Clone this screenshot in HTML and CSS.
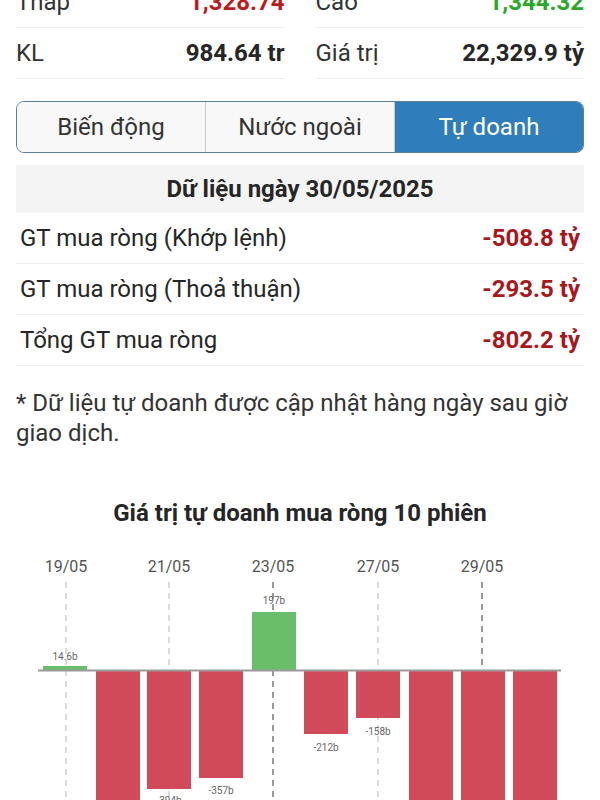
FILE: index.html
```html
<!DOCTYPE html>
<html>
  <head>
    <title>
      Tự doanh
    </title>
    <link rel="stylesheet" href="styles.css">
  </head>
  <body>
    <div class="page">
      <div class="stats">
        <div class="stat">
          <span class="stat-label">Thấp</span>
          <span class="stat-value down">1,328.74</span>
        </div>
        <div class="stat">
          <span class="stat-label">Cao</span>
          <span class="stat-value up">1,344.32</span>
        </div>
        <div class="stat">
          <span class="stat-label">KL</span>
          <span class="stat-value">984.64 tr</span>
        </div>
        <div class="stat">
          <span class="stat-label">Giá trị</span>
          <span class="stat-value">22,329.9 tỷ</span>
        </div>
      </div>

      <div class="tabs">
        <div class="tab">Biến động</div>
        <div class="tab">Nước ngoài</div>
        <div class="tab active">Tự doanh</div>
      </div>

      <div class="data-box">
        <div class="data-header">Dữ liệu ngày 30/05/2025</div>
        <div class="data-row">
          <span>GT mua ròng (Khớp lệnh)</span>
          <span class="data-value">-508.8 tỷ</span>
        </div>
        <div class="data-row">
          <span>GT mua ròng (Thoả thuận)</span>
          <span class="data-value">-293.5 tỷ</span>
        </div>
        <div class="data-row">
          <span>Tổng GT mua ròng</span>
          <span class="data-value">-802.2 tỷ</span>
        </div>
      </div>

      <p class="note">* Dữ liệu tự doanh được cập nhật hàng ngày sau giờ giao dịch.</p>

      <h3 class="chart-title">Giá trị tự doanh mua ròng 10 phiên</h3>
    </div>

    <svg class="chart" width="600" height="280" viewBox="0 0 600 280">
      <g class="dates">
        <text x="66" y="32">19/05</text>
        <text x="169" y="32">21/05</text>
        <text x="273" y="32">23/05</text>
        <text x="378" y="32">27/05</text>
        <text x="482" y="32">29/05</text>
      </g>
      <g class="grid">
        <line x1="66" y1="42" x2="66" y2="280"></line>
        <line x1="169" y1="42" x2="169" y2="280"></line>
        <line class="dark" x1="273" y1="42" x2="273" y2="280"></line>
        <line x1="378" y1="42" x2="378" y2="280"></line>
        <line class="dark" x1="482" y1="42" x2="482" y2="280"></line>
      </g>
      <g class="bars">
        <rect class="pos" x="43" y="126" width="44" height="4"></rect>
        <rect class="neg" x="96" y="131" width="44" height="160"></rect>
        <rect class="neg" x="147" y="131" width="44" height="118"></rect>
        <rect class="neg" x="199" y="131" width="44" height="107"></rect>
        <rect class="pos" x="252" y="72" width="44" height="58"></rect>
        <rect class="neg" x="304" y="131" width="44" height="63"></rect>
        <rect class="neg" x="356" y="131" width="44" height="47"></rect>
        <rect class="neg" x="409" y="131" width="44" height="160"></rect>
        <rect class="neg" x="461" y="131" width="44" height="160"></rect>
        <rect class="neg" x="513" y="131" width="44" height="160"></rect>
      </g>
      <line class="zero" x1="38" y1="130.5" x2="561" y2="130.5"></line>
      <g class="labels">
        <text x="65" y="120">14.6b</text>
        <text x="169" y="264">-394b</text>
        <text x="221" y="254">-357b</text>
        <text x="274" y="64">197b</text>
        <text x="326" y="211">-212b</text>
        <text x="378" y="195">-158b</text>
      </g>
    </svg>
  </body>
</html>
```

FILE: styles.css
```css
body {
  margin: 0;
  font-family: Roboto, "Noto Sans", sans-serif;
  color: #262626;
  background: #fff;
  overflow: hidden;
}

.page {
  padding: 0 16px;
}

.stats {
  display: grid;
  grid-template-columns: 1fr 1fr;
  column-gap: 31px;
  margin-top: -23px;
}

.stat {
  display: flex;
  justify-content: space-between;
  align-items: center;
  height: 50px;
  border-bottom: 1px solid #efefef;
  font-size: 24px;
}

.stat-label {
  color: #333;
}

.stat-value {
  font-weight: bold;
}

.stat-value.down {
  color: #bb1a1f;
}

.stat-value.up {
  color: #2ba82b;
}

.tabs {
  display: flex;
  margin-top: 22px;
  height: 50px;
  border: 1px solid #5d7f99;
  border-radius: 8px;
  overflow: hidden;
}

.tab {
  flex: 1;
  display: flex;
  align-items: center;
  justify-content: center;
  background: #f8f8f8;
  color: #333;
  font-size: 24px;
  border-right: 1px solid #c9c9c9;
}

.tab:last-child {
  border-right: none;
}

.tab.active {
  background: #2f7dba;
  color: #fff;
}

.data-box {
  margin-top: 12px;
}

.data-header {
  height: 48px;
  display: flex;
  align-items: center;
  justify-content: center;
  background: #f4f4f4;
  font-size: 24px;
  font-weight: bold;
}

.data-row {
  display: flex;
  justify-content: space-between;
  align-items: center;
  height: 50px;
  padding: 0 4px;
  border-bottom: 1px solid #efefef;
  font-size: 24px;
}

.data-value {
  color: #a8171c;
  font-weight: bold;
}

.note {
  margin: 22px 0 0;
  font-size: 24px;
  line-height: 30px;
  color: #333;
}

.chart-title {
  margin: 51px 0 0;
  text-align: center;
  font-size: 24px;
  line-height: 28px;
  font-weight: bold;
}

.chart {
  display: block;
  margin-top: 13px;
}

.dates text {
  font-size: 16px;
  fill: #555;
  text-anchor: middle;
}

.grid line {
  stroke: #cfcfcf;
  stroke-width: 1.5;
  stroke-dasharray: 6 5;
}

.grid line.dark {
  stroke: #7a7a7a;
}

.bars .pos {
  fill: #6abd69;
}

.bars .neg {
  fill: #d14a5a;
}

.zero {
  stroke: #9a9a9a;
  stroke-width: 2;
}

.labels text {
  font-size: 10px;
  fill: #666;
  text-anchor: middle;
}
```
